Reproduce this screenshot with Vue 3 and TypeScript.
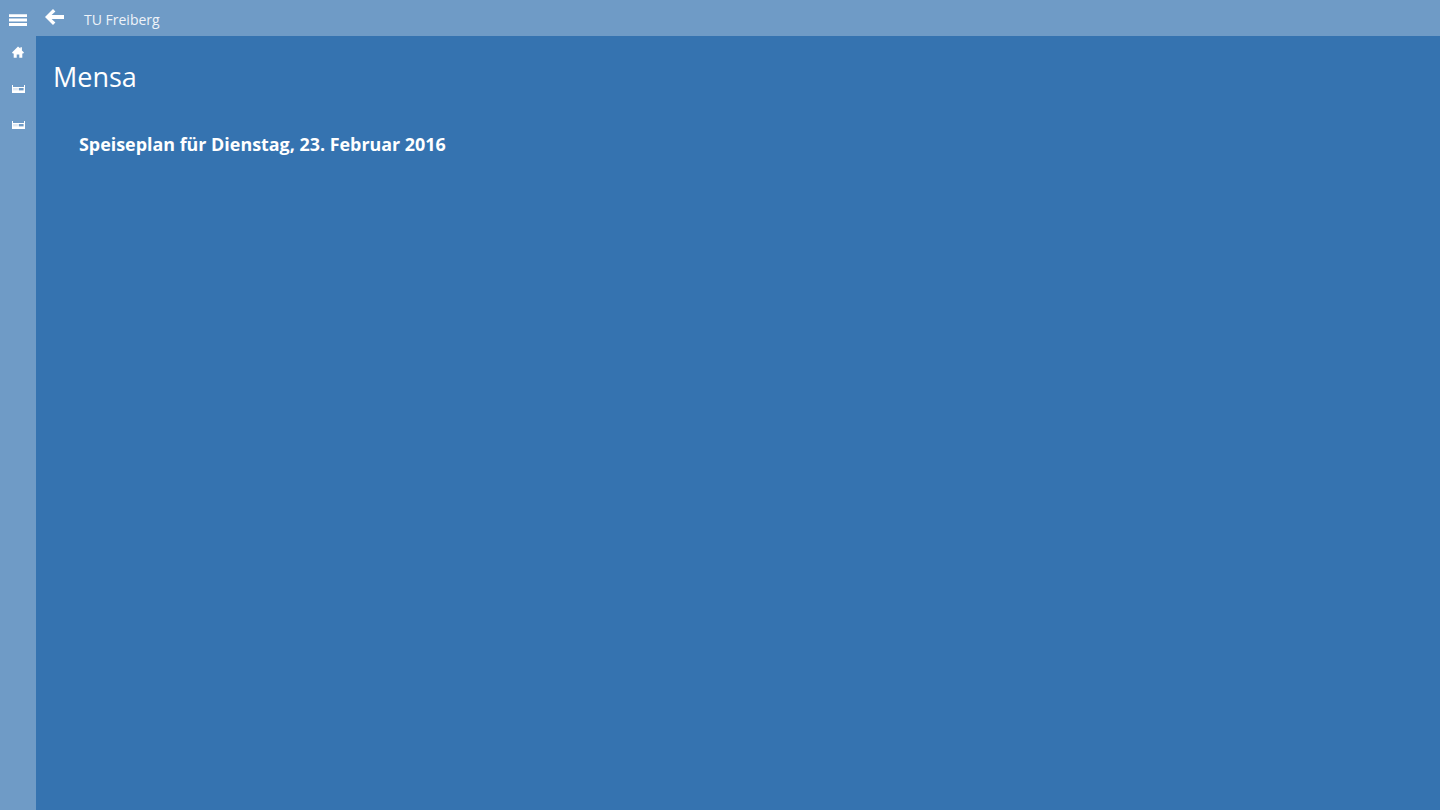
<script setup lang="ts">
const navItems: string[] = ['home', 'bed', 'bed']
</script>

<template>
  <div class="shell">
    <header class="topbar">
      <button class="square" aria-label="Menü">
        <svg width="18" height="12" viewBox="0 0 18 12"><path d="M0 .2h18v2.9H0zM0 4.6h18v2.9H0zM0 9h18v2.9H0z" fill="#fff" /></svg>
      </button>
      <button class="back" aria-label="Zurück">
        <svg width="19" height="16" viewBox="0 0 19 16"><path d="M8 0 10.4 2.4 6.6 6H19V10H6.6L10.4 13.6 8 16 0 8Z" fill="#fff" /></svg>
      </button>
      <span class="app-title">TU Freiberg</span>
    </header>
    <div class="body">
      <nav class="rail">
        <button v-for="(item, i) in navItems" :key="i" class="square" :aria-label="item">
          <svg v-if="item === 'home'" class="home" width="12" height="12" viewBox="0 0 12 12"><path d="M6 .4 8.4 2.6V1.2h1.5v3.3L12 6.6l-.8.8h-.9v4.4H7.3V8.4H4.7v3.4H1.7V7.4H.8L0 6.6Z" fill="#fff" /></svg>
          <svg v-else class="bed" width="13" height="8" viewBox="0 0 13 8"><path d="M0 0h1v2h11V0h1v8H0Z" fill="#fff" /><path d="M6.8 3h4.8v2.4H6.8z" fill="#6f9bc6" /><path d="M1 3h4.8v2.4H1z" fill="#dfe8f2" /></svg>
        </button>
      </nav>
      <main class="content">
        <h1 class="page-title">Mensa</h1>
        <h2 class="menu-title">Speiseplan für Dienstag, 23. Februar 2016</h2>
      </main>
    </div>
  </div>
</template>

<style>
html, body { margin: 0; background: #3573b0; }
</style>

<style scoped>
.shell { width: 1440px; height: 810px; display: flex; flex-direction: column; overflow: hidden; font-family: "Open Sans", "Noto Sans", sans-serif; color: #fff; background: #3573b0; }
.topbar { height: 36px; flex: none; display: flex; align-items: center; background: #6f9bc6; }
.square { width: 36px; height: 36px; padding: 0; border: 0; background: none; display: flex; align-items: center; justify-content: center; flex: none; }
.topbar > .square svg { margin-top: 3px; }
.back { width: 36px; height: 36px; padding: 0 0 3px; border: 0; background: none; display: flex; align-items: center; justify-content: center; flex: none; }
.app-title { margin-left: 12px; font-size: 14px; line-height: 36px; padding-top: 3px; color: #eef3f9; }
.body { flex: 1; display: flex; min-height: 0; }
.rail { width: 36px; flex: none; background: #6f9bc6; display: flex; flex-direction: column; }
.rail .home { margin-bottom: 4px; }
.rail .bed { margin-bottom: 3px; }
.content { flex: 1; padding: 0 17px; }
.page-title { margin: 22px 0 0; font-size: 27px; line-height: 38px; font-weight: 400; }
.menu-title { margin: 36px 0 0 26px; font-size: 17.9px; line-height: 24px; font-weight: 700; }
</style>
